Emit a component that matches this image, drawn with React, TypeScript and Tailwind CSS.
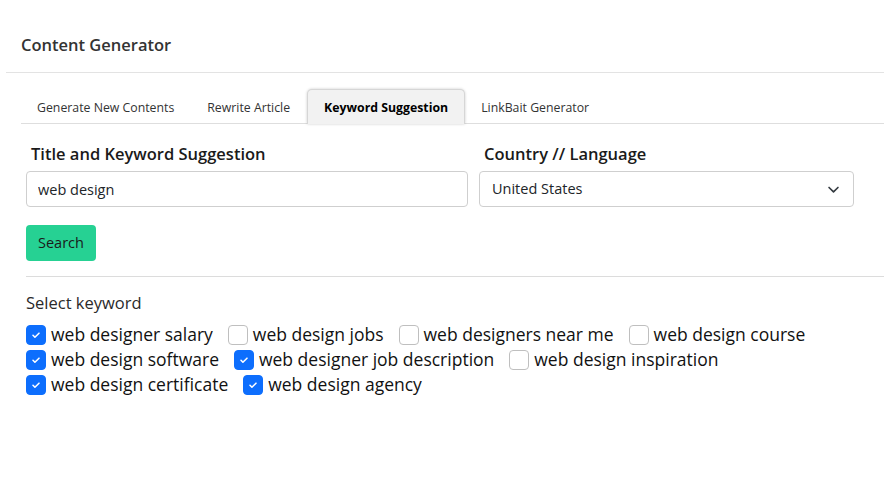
import { useState } from 'react';

const tabs = ['Generate New Contents', 'Rewrite Article', 'Keyword Suggestion', 'LinkBait Generator'];

const initialKeywords = [
  { label: 'web designer salary', checked: true },
  { label: 'web design jobs', checked: false },
  { label: 'web designers near me', checked: false },
  { label: 'web design course', checked: false },
  { label: 'web design software', checked: true },
  { label: 'web designer job description', checked: true },
  { label: 'web design inspiration', checked: false },
  { label: 'web design certificate', checked: true },
  { label: 'web design agency', checked: true },
];

function CheckBox({ checked }: { checked: boolean }) {
  return checked ? (
    <span className="w-5 h-5 rounded-[4px] bg-[#0d6efd] border border-[#0d6efd] flex items-center justify-center shrink-0">
      <svg width="12" height="12" viewBox="0 0 20 20" fill="none">
        <path d="M5 10.5l3.2 3.2L15 7" stroke="white" strokeWidth="2.6" strokeLinecap="round" strokeLinejoin="round" />
      </svg>
    </span>
  ) : (
    <span className="w-5 h-5 rounded-[4px] bg-white border border-[#bfbfbf] shrink-0" />
  );
}

export default function App() {
  const [activeTab, setActiveTab] = useState('Keyword Suggestion');
  const [keywords, setKeywords] = useState(initialKeywords);

  const toggle = (i: number) =>
    setKeywords(k => k.map((kw, idx) => (idx === i ? { ...kw, checked: !kw.checked } : kw)));

  return (
    <div className="w-[884px] h-[477px] bg-white text-[#212529] overflow-hidden" style={{ fontFamily: '"Open Sans", "Noto Sans", sans-serif' }}>
      <div className="ml-[6px]">
        {/* Header */}
        <div className="h-[73px] flex items-center px-[15px] pt-[18px] border-b border-[#e3e3e3]">
          <h1 className="text-[16.5px] font-semibold text-[#333]">Content Generator</h1>
        </div>

        {/* Body */}
        <div className="pl-[15px] pt-[16px]">
          {/* Tabs */}
          <div className="flex h-[35px] border-b border-[#dedede] text-[12.3px] text-[#333]">
            {tabs.map(t => (
              <button
                key={t}
                onClick={() => setActiveTab(t)}
                className={`h-[35px] pt-[3px] whitespace-nowrap rounded-t-[5px] ${
                  activeTab === t
                    ? 'px-4 bg-[#f2f2f2] font-bold text-black border border-b-0 border-[#d6d6d6] shadow-[0_0_3px_rgba(0,0,0,0.2)]'
                    : 'pl-4 pr-[17px] bg-transparent'
                }`}
              >
                {t}
              </button>
            ))}
          </div>

          {/* Form */}
          <div className="pl-[5px] pt-[17px]">
            <div className="flex gap-[11px]">
              <div className="w-[442px]">
                <label className="block pl-[5px] text-[16.5px] font-semibold mb-[4px] leading-[26px] text-[#1a1a1a]">Title and Keyword Suggestion</label>
                <input
                  type="text"
                  defaultValue="web design"
                  className="w-full h-[36px] px-[11px] border border-[#cfcfcf] rounded-[4px] text-[14.5px] text-[#212529] focus:outline-none"
                />
              </div>
              <div className="w-[375px]">
                <label className="block pl-[5px] text-[16.5px] font-semibold mb-[4px] leading-[26px] text-[#1a1a1a]">Country // Language</label>
                <div className="relative h-[36px] border border-[#cfcfcf] rounded-[4px] flex items-center px-[12px] text-[14.5px]">
                  United States
                  <svg className="absolute right-[13px]" width="13" height="13" viewBox="0 0 16 16" fill="none">
                    <path d="M2.5 5.5L8 11l5.5-5.5" stroke="#343a40" strokeWidth="2" strokeLinecap="round" strokeLinejoin="round" />
                  </svg>
                </div>
              </div>
            </div>

            <button className="mt-[18px] h-[36px] px-[12px] bg-[#26d193] rounded-[4px] text-[14.5px] text-[#1a1a1a]">Search</button>

            <div className="mt-[15px] border-t border-[#dcdcdc]" />

            <div className="pt-[13px]">
              <div className="text-[16.5px] leading-[26px] text-[#2a2a2a]">Select keyword</div>
              <div className="flex flex-wrap w-[800px] mt-[6px] text-[17.5px] leading-[25px] text-[#111]">
                {keywords.map((kw, i) => (
                  <label key={kw.label} onClick={() => toggle(i)} className="flex items-center gap-[5px] mr-[15px] cursor-pointer">
                    <CheckBox checked={kw.checked} />
                    <span>{kw.label}</span>
                  </label>
                ))}
              </div>
            </div>
          </div>
        </div>
      </div>
    </div>
  );
}
